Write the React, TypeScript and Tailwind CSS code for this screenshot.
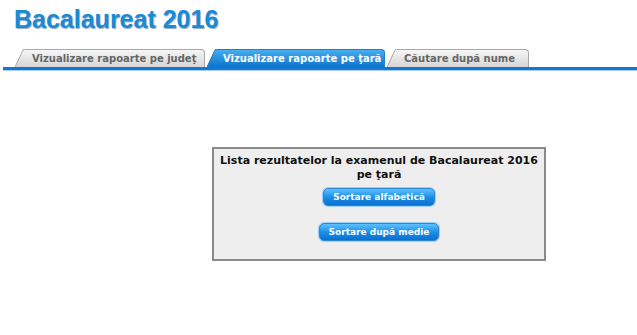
import React from "react";

function Slant({ active }: { active?: boolean }) {
  return (
    <svg width="10" height="18" viewBox="0 0 10 18" className="block shrink-0" aria-hidden>
      <defs>
        <linearGradient id={active ? "ga" : "gi"} x1="0" y1="0" x2="0" y2="1">
          <stop offset="0" stopColor={active ? "#45aef0" : "#f6f6f6"} />
          <stop offset="1" stopColor={active ? "#0b74cc" : "#d6d6d6"} />
        </linearGradient>
      </defs>
      <path d="M0 18 L8 1 Q9 0 10 0 L10 18 Z" fill={`url(#${active ? "ga" : "gi"})`} />
      <path d="M0 18 L8 1 Q9 0 10 0" fill="none" stroke={active ? "#1f7fd0" : "#a8a8a8"} strokeWidth="1" />
    </svg>
  );
}

function Tab({ label, active, w }: { label: string; active?: boolean; w: string }) {
  return (
    <div className="flex items-end">
      <Slant active={active} />
      <div
        className={
          active
            ? `flex h-[18px] items-center whitespace-nowrap rounded-tr-[4px] border-t border-r border-[#1f7fd0] bg-gradient-to-b from-[#45aef0] to-[#0b74cc] pl-[6px] text-[10px] font-bold text-white ${w}`
            : `flex h-[18px] items-center whitespace-nowrap rounded-tr-[4px] border-t border-r border-[#a8a8a8] bg-gradient-to-b from-[#f6f6f6] to-[#d6d6d6] pl-[7px] text-[10px] font-bold text-[#666] ${w}`
        }
      >
        {label}
      </div>
    </div>
  );
}

function BlueButton({ children }: { children: React.ReactNode }) {
  return (
    <button
      type="button"
      className="whitespace-nowrap rounded-[5px] border border-[#2c86d6] bg-gradient-to-b from-[#5cc0ff] via-[#1a90ea] to-[#0a6fcf] px-[9px] py-[2px] text-[9px] font-bold leading-[12px] text-white shadow-[0_0_0_1px_#9fd0f4]"
    >
      {children}
    </button>
  );
}

export default function App() {
  return (
    <div
      className="h-[335px] w-[637px] overflow-hidden bg-white"
      style={{ fontFamily: '"DejaVu Sans", Verdana, sans-serif' }}
    >
      <h1
        className="pl-[14px] pt-[5px] text-[25px] font-bold leading-[28px] text-[#1a8ad6] [text-shadow:1px_1px_1px_#9ab]"
        style={{ fontFamily: '"Liberation Sans", Arial, sans-serif' }}
      >
        Bacalaureat 2016
      </h1>
      <div className="mt-[16px] flex items-end gap-[2px] pl-[15px]">
        <Tab label="Vizualizare rapoarte pe judeţ" w="w-[180px]" />
        <Tab label="Vizualizare rapoarte pe ţară" active w="w-[168px]" />
        <Tab label="Căutare după nume" w="w-[132px]" />
      </div>
      <div className="ml-[3px] h-[3px] bg-[#1577d2]" />
      <div className="ml-[3px] h-[1px] bg-[#a9cdee]" />

      <div className="ml-[212px] mt-[76px] flex h-[114px] w-[334px] flex-col items-center border-2 border-[#8a8a8a] bg-[#eeeeee] pt-[5px]">
        <p className="text-center text-[11px] font-bold leading-[14px] text-[#111]">
          Lista rezultatelor la examenul de Bacalaureat 2016
          <br />
          pe ţară
        </p>
        <div className="mt-[1px]">
          <BlueButton>Sortare alfabetică</BlueButton>
        </div>
        <div className="mt-[11px]">
          <BlueButton>Sortare după medie</BlueButton>
        </div>
      </div>
    </div>
  );
}
